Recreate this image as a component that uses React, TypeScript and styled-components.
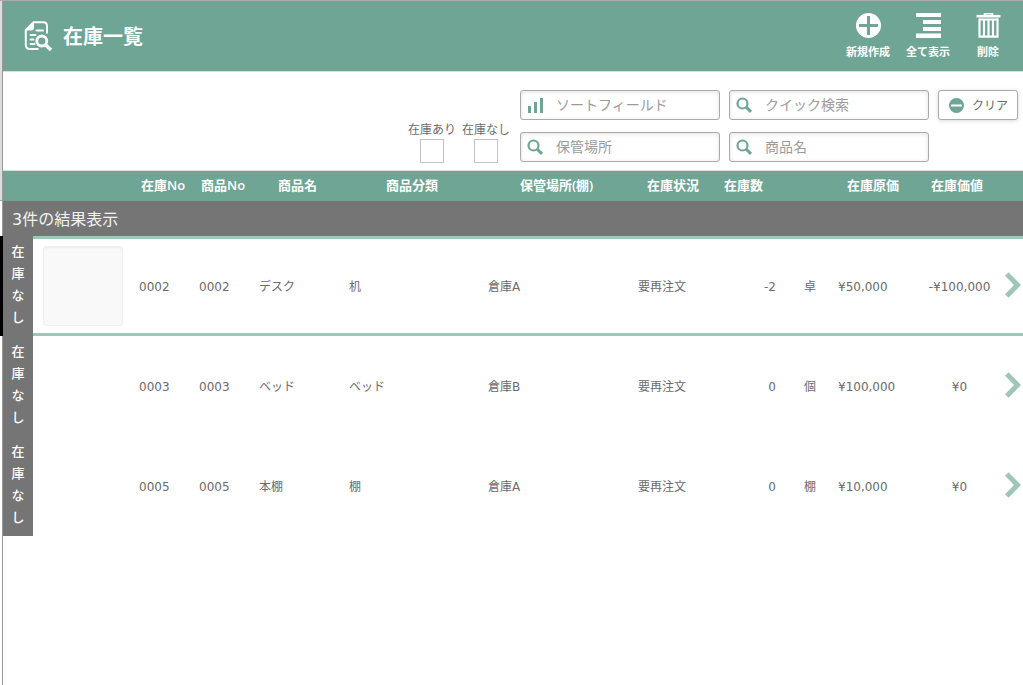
import React, { useState } from "react";
import styled, { createGlobalStyle } from "styled-components";

const green = "#6fa594";
const paleGreen = "#a0c6b5";
const grey = "#757575";

const GlobalStyle = createGlobalStyle`
  *, *::before, *::after { box-sizing: border-box; }
  html, body, #root { min-height: 100%; }
  body {
    margin: 0;
    background: #fff;
    color: #6b6b6b;
    font-family: "DejaVu Sans", "Noto Sans CJK JP", sans-serif;
    font-size: 12px;
  }
  button, input { font: inherit; color: inherit; }
`;

const Page = styled.div`
  display: grid;
  grid-template-columns: 3px minmax(0, 1fr);
  min-height: 100vh;
  border-top: 1px solid #aaa;
`;

const Gutter = styled.div`
  border-right: 1px solid #999;
`;

const GutterTop = styled.div`
  height: 200px;
  background: #ddd;
  border-bottom: 1px solid #aaa;
`;

const Main = styled.main`
  min-width: 0;
`;

const Header = styled.header`
  display: flex;
  align-items: center;
  justify-content: space-between;
  height: 71px;
  padding: 0 5px 0 20px;
  background: ${green};
  border-bottom: 1px solid #dcdcdc;
  color: #fff;
`;

const Title = styled.h1`
  display: flex;
  align-items: center;
  gap: 10px;
  margin: 0;
  font-family: "Noto Sans CJK JP", sans-serif;
  font-size: 20px;
  line-height: 30px;
  font-weight: 700;
`;

const Actions = styled.nav`
  display: flex;
`;

const Action = styled.button`
  display: flex;
  flex-direction: column;
  align-items: center;
  gap: 5px;
  width: 60px;
  padding: 0;
  border: 0;
  background: none;
  cursor: pointer;
  font-family: "Noto Sans CJK JP", sans-serif;
  font-size: 11px;
  line-height: 16px;
  font-weight: 700;
`;

const Filters = styled.form`
  display: flex;
  justify-content: flex-end;
  align-items: flex-start;
  gap: 7px;
  height: 99px;
  padding: 18px 5px 0;
  border-bottom: 1px solid #ddd;
`;

const Checks = styled.div`
  display: flex;
  padding-top: 31px;
`;

const Check = styled.label`
  display: flex;
  flex-direction: column;
  align-items: center;
  width: 54px;
  line-height: 18px;
  white-space: nowrap;
`;

const Box = styled.input`
  appearance: none;
  width: 24px;
  height: 24px;
  margin: 0;
  border: 1px solid #c4c4c4;
  background: #fff;
  &:checked {
    background: ${green};
  }
`;

const Fields = styled.div`
  display: grid;
  grid-template-columns: 200px 200px 80px;
  gap: 12px 9px;
`;

const Field = styled.label`
  display: flex;
  align-items: center;
  gap: 12px;
  height: 30px;
  padding: 0 6px;
  border: 1px solid #aaa;
  border-radius: 3px;
  box-shadow: inset 0 1px 4px rgba(0, 0, 0, 0.12);
`;

const FieldInput = styled.input`
  flex: 1;
  min-width: 0;
  padding: 0;
  border: 0;
  outline: 0;
  background: none;
  font-size: 14px;
  line-height: 20px;
  &::placeholder {
    color: #9b9b9b;
    opacity: 1;
  }
`;

const Clear = styled.button`
  display: flex;
  align-items: center;
  gap: 8px;
  height: 30px;
  padding: 0 0 0 10px;
  border: 1px solid #aaa;
  border-radius: 3px;
  background: #fff;
  box-shadow: 0 1px 4px rgba(0, 0, 0, 0.15);
  font-family: "Noto Sans CJK JP", sans-serif;
  font-size: 12px;
  line-height: 18px;
  white-space: nowrap;
  cursor: pointer;
`;

const Table = styled.table`
  width: 100%;
  table-layout: fixed;
  border-collapse: collapse;
`;

const Col = styled.col<{ $width: number }>`
  width: ${(p) => p.$width}px;
`;

const Head = styled.th<{ $inset: number }>`
  height: 30px;
  padding: 0 0 2px ${(p) => p.$inset}px;
  background: ${green};
  color: #fff;
  text-align: left;
  font-family: "Open Sans", "Noto Sans CJK JP", sans-serif;
  font-size: 13px;
  line-height: 20px;
  font-weight: 600;
  white-space: nowrap;
`;

const Summary = styled.th`
  height: 35px;
  padding: 2px 9px 0;
  background: ${grey};
  color: #f2f2f2;
  text-align: left;
  font-size: 16px;
  line-height: 24px;
  font-weight: 400;
`;

const Row = styled.tr<{ $selected: boolean }>`
  height: 100px;
  > td {
    box-shadow: ${(p) =>
      p.$selected ? `inset 0 3px ${paleGreen}, inset 0 -3px ${paleGreen}` : "none"};
  }
`;

const Cell = styled.td<{ $align?: "left" | "center" | "right"; $inset?: number }>`
  padding: 2px 0 0 ${(p) => p.$inset ?? 10}px;
  text-align: ${(p) => p.$align ?? "left"};
  line-height: 18px;
  white-space: nowrap;
`;

const MediaCell = styled.td<{ $inset: number }>`
  padding: 0 0 0 ${(p) => p.$inset}px;
`;

const TagCell = styled.th`
  position: relative;
  padding: 0 0 4px;
  background: ${grey};
`;

const TagText = styled.span`
  display: block;
  width: 13px;
  margin: 0 auto;
  color: #fff;
  font-family: "Noto Sans CJK JP", sans-serif;
  font-size: 13px;
  line-height: 22px;
  font-weight: 500;
  word-break: break-all;
`;

const Marker = styled.span`
  position: absolute;
  top: 0;
  bottom: 0;
  right: 100%;
  width: 3px;
  background: #000;
`;

const Thumb = styled.div`
  width: 80px;
  height: 80px;
  border: 1px solid #f0f0f0;
  border-radius: 3px;
  background: #f9f9f9;
  box-shadow: inset 0 1px 2px rgba(0, 0, 0, 0.05);
`;

const Open = styled.button`
  display: block;
  padding: 0;
  border: 0;
  background: none;
  cursor: pointer;
`;

const DocumentSearchIcon = () => (
  <svg width="30" height="32" viewBox="0 0 30 32" fill="none" stroke="#fff" strokeWidth="2" aria-hidden="true">
    <path d="M24 13.500V6Q24 2.300 20.500 2.300H10.500L2.800 10V25Q2.800 29 7 29H15.500" />
    <path d="M11 2.300V7.500Q11 10.500 8 10.500H2.800Z" fill="#fff" stroke="none" />
    <path d="M13.500 10.500H20M7.500 15H12.500M7.500 19.500H10.500M7.500 24H11.500" strokeLinecap="round" />
    <circle cx="18.800" cy="21" r="5" strokeWidth="2.800" />
    <path d="M22.500 24.800L28 30" strokeWidth="3.600" />
  </svg>
);

const PlusIcon = () => (
  <svg width="25" height="25" viewBox="0 0 25 25" aria-hidden="true">
    <circle cx="12.500" cy="12.500" r="12.500" fill="#fff" />
    <path d="M12.500 3V22M3 12.500H22" stroke={green} strokeWidth="3" />
  </svg>
);

const ListIcon = () => (
  <svg width="25" height="25" viewBox="0 0 25 25" fill="#fff" aria-hidden="true">
    <path d="M0 0H25V4H0ZM7 7H25V11H7ZM7 14H25V18H7ZM0 20.500H25V25H0Z" />
  </svg>
);

const TrashIcon = () => (
  <svg width="25" height="25" viewBox="0 0 25 25" fill="none" stroke="#fff" aria-hidden="true">
    <path d="M.5 3.200H24.500" strokeWidth="2.600" />
    <path d="M8.500 2.500V.8H16.500V2.500" strokeWidth="1.600" />
    <path d="M3.500 5.500V23.700H21.500V5.500" strokeWidth="2.200" />
    <path d="M3 6.500H22" strokeWidth="2" />
    <path d="M8 7V23M12.500 7V23M17 7V23" strokeWidth="2.200" />
  </svg>
);

const BarsIcon = () => (
  <svg width="17" height="16" viewBox="0 0 17 16" fill={green} aria-hidden="true">
    <path d="M1 9H4V16H1ZM7 5H10V16H7ZM13 1H16V16H13Z" />
  </svg>
);

const SearchIcon = () => (
  <svg width="17" height="16" viewBox="0 0 17 16" fill="none" stroke={green} aria-hidden="true">
    <circle cx="6.500" cy="6.500" r="5" strokeWidth="2.200" />
    <path d="M10 10L15 14.800" strokeWidth="3" />
  </svg>
);

const MinusIcon = () => (
  <svg width="15" height="15" viewBox="0 0 15 15" aria-hidden="true">
    <circle cx="7.500" cy="7.500" r="7.500" fill={green} />
    <path d="M2 7.500H13" stroke="#fff" strokeWidth="2" />
  </svg>
);

const ChevronIcon = () => (
  <svg width="16" height="26" viewBox="0 0 16 26" fill="none" stroke={paleGreen} strokeWidth="5" aria-hidden="true">
    <path d="M1.800 2L12.500 13L1.800 24" />
  </svg>
);

const columns = [
  { label: "", width: 30, inset: 0 },
  { label: "", width: 96, inset: 0 },
  { label: "在庫No", width: 60, inset: 12 },
  { label: "商品No", width: 60, inset: 12 },
  { label: "商品名", width: 90, inset: 29 },
  { label: "商品分類", width: 139, inset: 47 },
  { label: "保管場所(棚)", width: 150, inset: 42 },
  { label: "在庫状況", width: 88, inset: 19 },
  { label: "在庫数", width: 60, inset: 8 },
  { label: "", width: 52, inset: 0 },
  { label: "在庫原価", width: 86, inset: 19 },
  { label: "在庫価値", width: 91, inset: 17 },
  { label: "", width: 18, inset: 0 },
];

const items = [
  { no: "0002", name: "デスク", category: "机", place: "倉庫A", status: "要再注文", qty: "-2", unit: "卓", cost: "¥50,000", value: "-¥100,000" },
  { no: "0003", name: "ベッド", category: "ベッド", place: "倉庫B", status: "要再注文", qty: "0", unit: "個", cost: "¥100,000", value: "¥0" },
  { no: "0005", name: "本棚", category: "棚", place: "倉庫A", status: "要再注文", qty: "0", unit: "棚", cost: "¥10,000", value: "¥0" },
];

const SearchField = ({ label, icon }: { label: string; icon: React.ReactNode }) => (
  <Field>
    {icon}
    <FieldInput type="text" aria-label={label} placeholder={label} />
  </Field>
);

export default function App() {
  const [selected, setSelected] = useState(0);
  return (
    <>
      <GlobalStyle />
      <Page>
        <Gutter>
          <GutterTop />
        </Gutter>
        <Main>
          <Header>
            <Title>
              <DocumentSearchIcon />
              在庫一覧
            </Title>
            <Actions>
              <Action type="button"><PlusIcon />新規作成</Action>
              <Action type="button"><ListIcon />全て表示</Action>
              <Action type="button"><TrashIcon />削除</Action>
            </Actions>
          </Header>
          <Filters>
            <Checks>
              <Check>在庫あり<Box type="checkbox" /></Check>
              <Check>在庫なし<Box type="checkbox" /></Check>
            </Checks>
            <Fields>
              <SearchField label="ソートフィールド" icon={<BarsIcon />} />
              <SearchField label="クイック検索" icon={<SearchIcon />} />
              <Clear type="reset"><MinusIcon />クリア</Clear>
              <SearchField label="保管場所" icon={<SearchIcon />} />
              <SearchField label="商品名" icon={<SearchIcon />} />
            </Fields>
          </Filters>
          <Table>
            <colgroup>
              {columns.map((c, i) => <Col key={i} $width={c.width} />)}
            </colgroup>
            <thead>
              <tr>
                {columns.map((c, i) => <Head key={i} $inset={c.inset}>{c.label}</Head>)}
              </tr>
              <tr>
                <Summary colSpan={columns.length}>3件の結果表示</Summary>
              </tr>
            </thead>
            <tbody>
              {items.map((item, i) => (
                <Row key={item.no} $selected={i === selected} onClick={() => setSelected(i)}>
                  <TagCell scope="row">
                    {i === selected && <Marker />}
                    <TagText>在庫なし</TagText>
                  </TagCell>
                  <MediaCell $inset={10}>{i === selected && <Thumb />}</MediaCell>
                  <Cell>{item.no}</Cell>
                  <Cell>{item.no}</Cell>
                  <Cell>{item.name}</Cell>
                  <Cell>{item.category}</Cell>
                  <Cell>{item.place}</Cell>
                  <Cell>{item.status}</Cell>
                  <Cell $align="right">{item.qty}</Cell>
                  <Cell $inset={28}>{item.unit}</Cell>
                  <Cell>{item.cost}</Cell>
                  <Cell $align="center" $inset={0}>{item.value}</Cell>
                  <MediaCell $inset={0}>
                    <Open type="button" aria-label="詳細"><ChevronIcon /></Open>
                  </MediaCell>
                </Row>
              ))}
            </tbody>
          </Table>
        </Main>
      </Page>
    </>
  );
}
